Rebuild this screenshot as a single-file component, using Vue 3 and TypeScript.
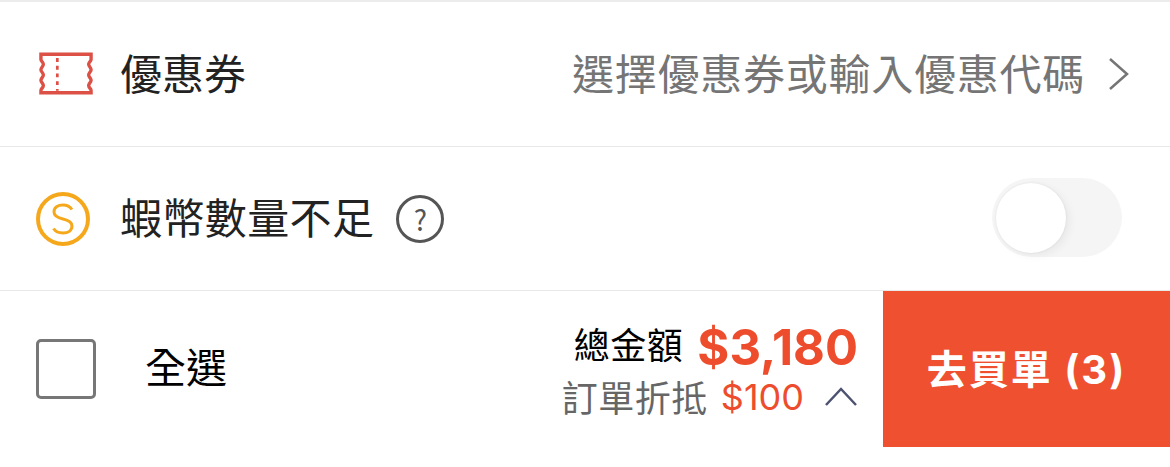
<template>
  <div class="page">
    <div class="row voucher-row">
      <svg class="row-icon" width="54" height="43" viewBox="0 0 56 44" fill="none">
        <path d="M2 2H54V7.500C54 9.500 51.500 10 51.500 12.500C51.500 15 54 15.500 54 18C54 20.500 51.500 21 51.500 23.500C51.500 26 54 26.500 54 29C54 31.500 51.500 32 51.500 34.500C51.500 37 54 37.500 54 39.500V42H2V39.500C2 37.500 4.500 37 4.500 34.500C4.500 32 2 31.500 2 29C2 26.500 4.500 26 4.500 23.500C4.500 21 2 20.500 2 18C2 15.500 4.500 15 4.500 12.500C4.500 10 2 9.500 2 7.500Z" stroke="#dc5045" stroke-width="3.500" />
        <path d="M19 6V40" stroke="#dc5045" stroke-width="2.800" stroke-dasharray="4 4" />
      </svg>
      <span class="row-label">優惠券</span>
      <span class="voucher-hint">選擇優惠券或輸入優惠代碼</span>
      <svg class="chevron" width="22" height="36" viewBox="0 0 22 36" fill="none">
        <path d="M2 3L19 18L2 33" stroke="#757575" stroke-width="2.500" />
      </svg>
    </div>

    <div class="row coin-row">
      <svg class="row-icon" width="56" height="56" viewBox="0 0 56 56" fill="none">
        <circle cx="28" cy="28" r="25" stroke="#f5a81c" stroke-width="4" />
        <path d="M37 18.500C35 15.500 32 14 28 14C23 14 19 16.500 19 21C19 25.500 23.500 27 28 28C32.500 29 37 30.500 37 35C37 39.500 33 42 28 42C24 42 20.500 40.500 18.500 37.500" stroke="#f5a81c" stroke-width="3" />
      </svg>
      <span class="row-label coin-label">{{ coinLabel }}</span>
      <span class="help">?</span>
      <div class="toggle" :class="{ on: useCoins }"><div class="knob"></div></div>
    </div>

    <div class="checkout">
      <div class="select-all">
        <span class="checkbox"></span>
        <span class="select-label">全選</span>
      </div>
      <div class="summary">
        <div class="total-line">
          <span class="total-label">總金額</span>
          <span class="total-price">${{ total.toLocaleString('en-US') }}</span>
        </div>
        <div class="discount-line">
          <span class="discount-label">訂單折抵</span>
          <span class="discount-price">${{ discount }}</span>
          <svg class="caret" width="34" height="20" viewBox="0 0 34 20" fill="none">
            <path d="M2 19L17 3L32 19" stroke="#4c5270" stroke-width="2.500" />
          </svg>
        </div>
      </div>
      <button class="buy">去買單 ({{ count }})</button>
    </div>
  </div>
</template>

<script setup lang="ts">
import { ref } from 'vue';

const coinLabel = '蝦幣數量不足';
const useCoins = ref(false);
const total = 3180;
const discount = 100;
const count = 3;
</script>

<style>
body { background: #fff; }
</style>

<style scoped>
.page {
  width: 1170px;
  height: 467px;
  background: #fff;
  border-top: 2px solid #ececec;
  box-sizing: border-box;
  font-family: "Noto Sans CJK TC", "Noto Sans", sans-serif;
  overflow: hidden;
}
.row {
  display: flex;
  align-items: center;
  box-sizing: border-box;
  border-bottom: 1px solid #e8e8e8;
  padding-left: 36px;
}
.voucher-row { height: 145px; padding-right: 40px; }
.coin-row { height: 144px; padding-right: 48px; }
.voucher-row .row-icon { margin: 0 0 1px 3px; }
.voucher-row .row-label { margin-left: 27px; }
.coin-row .row-icon { margin-top: 1px; margin-left: -1px; }
.row-label {
  font-size: 42px;
  line-height: 56px;
  color: #222;
  margin-left: 30px;
  padding-bottom: 5px;
}
.coin-row .coin-label {
  margin-left: 29px;
  letter-spacing: 0.4px;
}
.voucher-hint {
  margin-left: auto;
  font-size: 42px;
  letter-spacing: 0.75px;
  line-height: 56px;
  color: #757575;
  padding-bottom: 5px;
}
.chevron { margin-left: 23px; }
.help {
  width: 42px;
  height: 42px;
  margin-left: 22px;
  border: 3px solid #555;
  border-radius: 50%;
  display: flex;
  align-items: center;
  justify-content: center;
  font-size: 28px;
  color: #555;
}
.toggle {
  margin: 0 0 2px auto;
  width: 130px;
  height: 79px;
  border-radius: 40px;
  background: #f5f5f6;
  display: flex;
  align-items: center;
  padding-left: 4px;
  box-sizing: border-box;
}
.knob {
  width: 70px;
  height: 70px;
  border-radius: 50%;
  background: #fff;
  box-shadow: 0 0 3px rgba(0, 0, 0, 0.08), 4px 3px 8px rgba(0, 0, 0, 0.05);
}
.checkout {
  display: flex;
  height: 156px;
}
.select-all {
  display: flex;
  align-items: center;
  padding-left: 36px;
}
.checkbox {
  width: 60px;
  height: 60px;
  box-sizing: border-box;
  border: 3px solid #777;
  border-radius: 5px;
}
.select-label {
  font-size: 41px;
  color: #000;
  margin-left: 49px;
  padding-bottom: 8px;
}
.summary {
  margin-left: auto;
  padding-right: 25px;
  display: flex;
  flex-direction: column;
  align-items: flex-end;
  justify-content: center;
}
.total-line, .discount-line {
  display: flex;
  align-items: center;
  height: 50px;
  white-space: nowrap;
}
.total-label {
  font-size: 36px;
  letter-spacing: 0.5px;
  color: #000;
}
.total-price {
  font-family: Inter, "Liberation Sans", sans-serif;
  font-weight: 700;
  font-size: 49px;
  line-height: 50px;
  color: #ee4d2d;
  margin: 10px 0 0 14px;
}
.discount-line { margin-top: 3px; }
.discount-label {
  font-size: 36px;
  letter-spacing: 0.5px;
  color: #666;
}
.discount-price {
  font-family: Inter, "Liberation Sans", sans-serif;
  font-size: 36px;
  color: #ee4d2d;
  margin: 3px 0 0 13px;
}
.caret { margin-left: 20px; }
.buy {
  width: 287px;
  border: none;
  background: #ef5130;
  color: #fff;
  font-family: Inter, "Noto Sans CJK TC", sans-serif;
  font-weight: 700;
  font-size: 40px;
  letter-spacing: 2px;
  padding: 0 0 5px;
}
</style>
